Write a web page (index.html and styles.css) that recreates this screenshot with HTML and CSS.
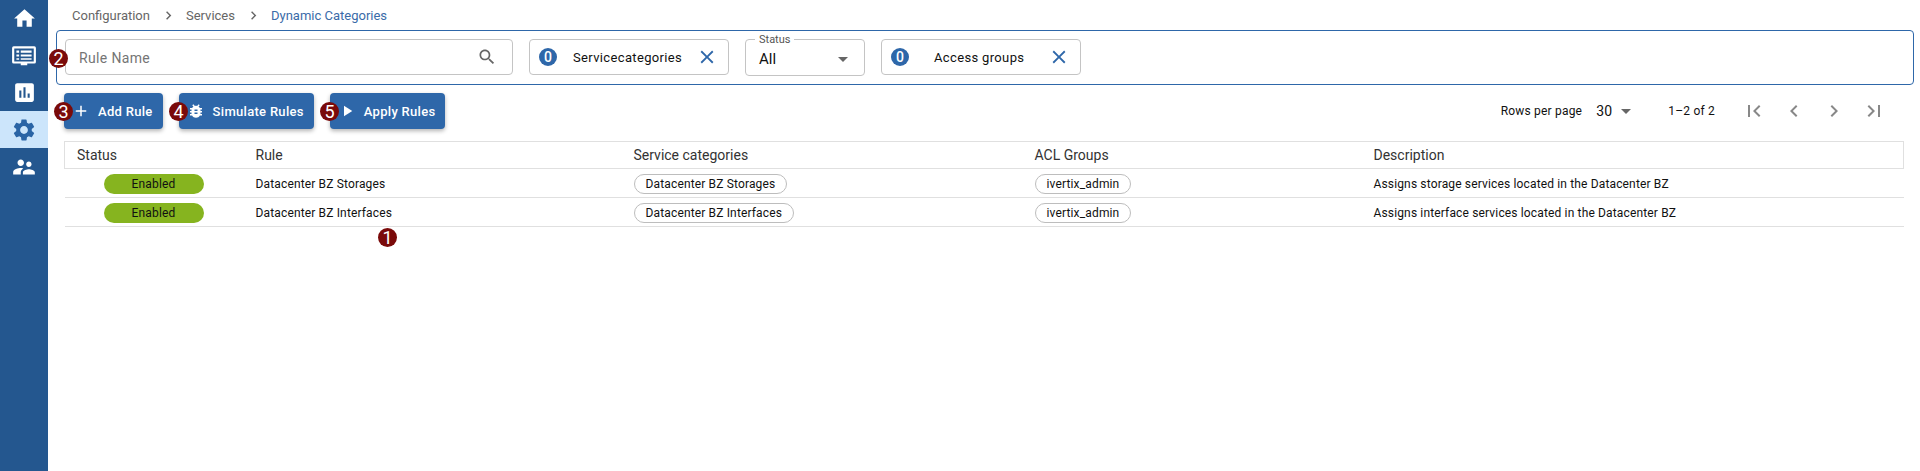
FILE: index.html
```html
<!DOCTYPE html>
<html lang="en">
<head>
    <meta charset="UTF-8">
    <meta name="viewport" content="width=device-width, initial-scale=1.0">
    <title>Dynamic Categories</title>
    <link rel="stylesheet" href="styles.css">
</head>
<body>

    <nav class="sidebar">
        <a class="nav-item"><svg viewBox="0 0 24 24" width="25" height="25"><path d="M10 20v-6h4v6h5v-8h3L12 3 2 12h3v8z"/></svg></a>
        <a class="nav-item"><svg viewBox="0 0 24 24" width="26" height="26"><path fill-rule="evenodd" d="M2.500 3h19A1.500 1.500 0 0 1 23 4.500v13a1.500 1.500 0 0 1-1.500 1.500H15v1.500H9V19H2.500A1.500 1.500 0 0 1 1 17.500v-13A1.500 1.500 0 0 1 2.500 3zM3 5v12h18V5zm2 2h2.500v2H5zm4 0h10v2H9zm-4 3.500h2.500v2H5zm4 0h10v2H9zM5 14h2.500v1.500H5zm4 0h10v1.500H9z"/></svg></a>
        <a class="nav-item"><svg viewBox="0 0 24 24" width="25" height="25"><path d="M19 3H5c-1.100 0-2 .9-2 2v14c0 1.100.9 2 2 2h14c1.100 0 2-.9 2-2V5c0-1.100-.9-2-2-2zM9 17H7v-7h2v7zm4 0h-2V7h2v10zm4 0h-2v-4h2v4z"/></svg></a>
        <a class="nav-item active"><svg viewBox="0 0 24 24" width="26" height="26"><path d="M19.140 12.940c.04-.3.06-.61.06-.94 0-.32-.02-.64-.07-.94l2.030-1.580a.49.49 0 0 0 .12-.61l-1.920-3.320a.488.488 0 0 0-.59-.22l-2.390.96c-.5-.38-1.030-.7-1.620-.94l-.36-2.540a.484.484 0 0 0-.48-.41h-3.840c-.24 0-.43.17-.47.41l-.36 2.540c-.59.24-1.130.57-1.620.94l-2.390-.96c-.22-.08-.47 0-.59.22L2.740 8.870c-.12.21-.08.47.12.61l2.030 1.580c-.05.3-.09.63-.09.94s.02.64.07.94l-2.030 1.580a.49.49 0 0 0-.12.61l1.920 3.320c.12.22.37.29.59.22l2.390-.96c.5.38 1.030.7 1.620.94l.36 2.540c.05.24.24.41.48.41h3.840c.24 0 .44-.17.47-.41l.36-2.540c.59-.24 1.130-.56 1.620-.94l2.390.96c.22.08.47 0 .59-.22l1.920-3.320c.12-.22.07-.47-.12-.61l-2.010-1.580zM12 15.600c-1.980 0-3.600-1.620-3.600-3.600s1.620-3.600 3.600-3.600 3.600 1.620 3.600 3.600-1.620 3.600-3.600 3.600z"/></svg></a>
        <a class="nav-item"><svg viewBox="0 0 24 24" width="26" height="26"><path d="M16.500 12c1.380 0 2.490-1.120 2.490-2.500S17.880 7 16.500 7 14 8.120 14 9.500s1.120 2.500 2.500 2.500zM9 11c1.660 0 2.990-1.340 2.990-3S10.660 5 9 5 6 6.340 6 8s1.340 3 3 3zm7.500 3c-1.830 0-5.500.92-5.500 2.750V19h11v-2.250c0-1.830-3.670-2.750-5.500-2.750zM9 13c-2.330 0-7 1.170-7 3.500V19h7v-2.250c0-.85.33-2.340 2.370-3.470C10.500 13.100 9.660 13 9 13z"/></svg></a>
    </nav>

    <main class="content">
        <div class="breadcrumb">
            <span>Configuration</span>
            <svg class="crumb-sep" viewBox="0 0 24 24" width="17" height="17"><path d="M10 6 8.590 7.410 13.170 12l-4.580 4.590L10 18l6-6z"/></svg>
            <span>Services</span>
            <svg class="crumb-sep" viewBox="0 0 24 24" width="17" height="17"><path d="M10 6 8.590 7.410 13.170 12l-4.580 4.590L10 18l6-6z"/></svg>
            <span class="crumb-current">Dynamic Categories</span>
        </div>

        <section class="filters">
            <div class="field search-field">
                <span class="placeholder">Rule Name</span>
                <svg viewBox="0 0 24 24" width="20" height="20"><path d="M15.500 14h-.79l-.28-.27C15.410 12.590 16 11.110 16 9.500 16 5.910 13.090 3 9.500 3S3 5.910 3 9.500 5.910 16 9.500 16c1.610 0 3.090-.59 4.230-1.570l.27.28v.79l5 4.990L20.490 19l-4.990-5zm-6 0C7.010 14 5 11.990 5 9.500S7.010 5 9.500 5 14 7.010 14 9.500 11.990 14 9.500 14z"/></svg>
            </div>
            <div class="field chip-field">
                <span class="count">0</span>
                <span class="chip-label label-services">Servicecategories</span>
                <svg class="clear" viewBox="0 0 24 24" width="22" height="22"><path d="M19 6.410 17.590 5 12 10.590 6.410 5 5 6.410 10.590 12 5 17.590 6.410 19 12 13.410 17.590 19 19 17.590 13.410 12z"/></svg>
            </div>
            <div class="field status-field">
                <span class="legend">Status</span>
                <span class="status-value">All</span>
                <span class="caret"></span>
            </div>
            <div class="field chip-field">
                <span class="count">0</span>
                <span class="chip-label label-access">Access groups</span>
                <svg class="clear" viewBox="0 0 24 24" width="22" height="22"><path d="M19 6.410 17.590 5 12 10.590 6.410 5 5 6.410 10.590 12 5 17.590 6.410 19 12 13.410 17.590 19 19 17.590 13.410 12z"/></svg>
            </div>
        </section>

        <div class="toolbar">
            <button class="btn btn-add">
                <svg viewBox="0 0 24 24" width="18" height="18"><path d="M19 13h-6v6h-2v-6H5v-2h6V5h2v6h6v2z"/></svg>
                Add Rule
            </button>
            <button class="btn btn-simulate">
                <svg viewBox="0 0 24 24" width="18" height="18"><path d="M20 8h-2.810c-.45-.78-1.070-1.450-1.820-1.960L17 4.410 15.590 3l-2.170 2.170C12.960 5.060 12.490 5 12 5c-.49 0-.96.06-1.410.17L8.410 3 7 4.410l1.620 1.630C7.880 6.550 7.260 7.220 6.810 8H4v2h2.090c-.05.33-.09.66-.09 1v1H4v2h2v1c0 .34.04.67.09 1H4v2h2.810c1.040 1.790 2.970 3 5.190 3s4.150-1.210 5.190-3H20v-2h-2.090c.05-.33.09-.66.09-1v-1h2v-2h-2v-1c0-.34-.04-.67-.09-1H20V8zm-6 8h-4v-2h4v2zm0-4h-4v-2h4v2z"/></svg>
                Simulate Rules
            </button>
            <button class="btn btn-apply">
                <svg viewBox="0 0 24 24" width="18" height="18"><path d="M8 5v14l11-7z"/></svg>
                Apply Rules
            </button>

            <div class="pagination">
                <span class="rows-label">Rows per page</span>
                <span class="rows-value">30</span>
                <span class="caret"></span>
                <span class="range">1–2 of 2</span>
                <svg viewBox="0 0 24 24" width="24" height="24"><path d="M18.410 16.590 13.820 12l4.590-4.590L17 6l-6 6 6 6zM6 6h2v12H6z"/></svg>
                <svg viewBox="0 0 24 24" width="24" height="24"><path d="M15.410 7.410 14 6l-6 6 6 6 1.410-1.410L10.830 12z"/></svg>
                <svg viewBox="0 0 24 24" width="24" height="24"><path d="M10 6 8.590 7.410 13.170 12l-4.580 4.590L10 18l6-6z"/></svg>
                <svg viewBox="0 0 24 24" width="24" height="24"><path d="M5.590 7.410 10.180 12l-4.590 4.590L7 18l6-6-6-6zM16 6h2v12h-2z"/></svg>
            </div>
        </div>

        <table class="rules">
            <colgroup>
                <col class="col-status"><col class="col-rule"><col class="col-cat"><col class="col-acl"><col class="col-desc">
            </colgroup>
            <thead>
                <tr>
                    <th>Status</th>
                    <th>Rule</th>
                    <th>Service categories</th>
                    <th>ACL Groups</th>
                    <th>Description</th>
                </tr>
            </thead>
            <tbody>
                <tr>
                    <td><span class="state">Enabled</span></td>
                    <td>Datacenter BZ Storages</td>
                    <td><span class="tag">Datacenter BZ Storages</span></td>
                    <td><span class="tag">ivertix_admin</span></td>
                    <td>Assigns storage services located in the Datacenter BZ</td>
                </tr>
                <tr>
                    <td><span class="state">Enabled</span></td>
                    <td>Datacenter BZ Interfaces</td>
                    <td><span class="tag">Datacenter BZ Interfaces</span></td>
                    <td><span class="tag">ivertix_admin</span></td>
                    <td>Assigns interface services located in the Datacenter BZ</td>
                </tr>
            </tbody>
        </table>
    </main>

    <!-- numbered callouts laid over the screenshot -->
    <span class="callout callout-1">1</span>
    <span class="callout callout-2">2</span>
    <span class="callout callout-3">3</span>
    <span class="callout callout-4">4</span>
    <span class="callout callout-5">5</span>

</body>
</html>
```

FILE: styles.css
```css
* {
    box-sizing: border-box;
}

html, body {
    height: 100%;
}

body {
    margin: 0;
    display: flex;
    overflow: hidden;
    position: relative;
    font-family: Roboto, "Liberation Sans", sans-serif;
    font-size: 12px;
    color: #111;
    background-color: #fff;
}

/* sidebar */
.sidebar {
    width: 48px;
    flex-shrink: 0;
    background-color: #24578f;
}

.nav-item {
    height: 37px;
    display: flex;
    align-items: center;
    justify-content: center;
    fill: #fff;
}

.nav-item.active {
    background-color: #cce5fb;
    fill: #2a64a5;
}

.content {
    flex: 1;
    min-width: 0;
    padding: 0 6px 0 8px;
}

/* breadcrumb */
.breadcrumb {
    height: 30px;
    padding-left: 16px;
    display: flex;
    align-items: center;
    font-size: 13px;
    color: #666;
}

.crumb-sep {
    margin: 0 9px 0 10px;
    fill: #666;
}

.crumb-current {
    color: #3a6ba8;
}

/* filters */
.filters {
    height: 55px;
    padding: 8px;
    display: flex;
    align-items: flex-start;
    gap: 16px;
    border: 1px solid #2e67a9;
    border-radius: 4px;
}

.field {
    height: 36px;
    display: flex;
    align-items: center;
    position: relative;
    border: 1px solid #c4c4c4;
    border-radius: 4px;
    font-size: 13px;
    letter-spacing: 0.35px;
}

.search-field {
    width: 448px;
    padding: 0 15px 0 13px;
    justify-content: space-between;
    fill: #666;
}

.placeholder {
    padding-top: 1px;
    font-size: 14px;
    color: #757575;
}

.chip-field {
    width: 200px;
    padding-left: 9px;
}

.count {
    width: 18px;
    height: 18px;
    border-radius: 50%;
    display: flex;
    align-items: center;
    justify-content: center;
    font-size: 14px;
    letter-spacing: 0;
    color: #fff;
    background-color: #2e67a9;
    font-weight: 500;
}

.chip-label {
    flex: 1;
}

.label-services {
    padding-left: 16px;
}

.label-access {
    padding-left: 25px;
}

.clear {
    margin-right: 10px;
    fill: #2e67a9;
}

.status-field {
    width: 120px;
    height: 37px;
    padding: 3px 16px 0 13px;
    justify-content: space-between;
}

.legend {
    position: absolute;
    top: -7px;
    left: 9px;
    padding: 0 4px;
    font-size: 11px;
    letter-spacing: 0;
    color: #555;
    background-color: #fff;
}

.status-value {
    font-size: 15px;
    letter-spacing: 0;
}

.caret {
    width: 0;
    height: 0;
    border-left: 5px solid transparent;
    border-right: 5px solid transparent;
    border-top: 5px solid #666;
}

/* toolbar */
.toolbar {
    height: 36px;
    margin-top: 8px;
    padding-left: 8px;
    display: flex;
    align-items: center;
    gap: 16px;
}

.btn {
    height: 36px;
    padding: 0 10px 0 8px;
    display: flex;
    align-items: center;
    border: none;
    border-radius: 4px;
    font-family: inherit;
    font-size: 13px;
    font-weight: 500;
    letter-spacing: 0.3px;
    color: #fff;
    fill: #fff;
    background-color: #2e67a9;
    box-shadow: 0 2px 4px rgba(0, 0, 0, 0.3);
}

.btn svg {
    margin-right: 8px;
}

.pagination {
    margin-left: auto;
    padding-right: 28px;
    display: flex;
    align-items: center;
    letter-spacing: 0.2px;
    fill: #888;
}

.pagination svg {
    margin-left: 16px;
}

.rows-label {
    margin-right: 14px;
}

.rows-value {
    margin-right: 9px;
    font-size: 14px;
}

.range {
    margin: 0 11px 0 37px;
}

/* table */
.rules {
    width: 1839px;
    margin: 12px 0 0 8px;
    table-layout: fixed;
    border-collapse: collapse;
}

.col-status { width: 179px; }
.col-rule { width: 378px; }
.col-cat { width: 401px; }
.col-acl { width: 339px; }
.col-desc { width: 542px; }

.rules th {
    height: 27px;
    padding: 0 12px;
    text-align: left;
    font-size: 14px;
    font-weight: 400;
    color: #333;
    border-top: 1px solid #e0e0e0;
    border-bottom: 1px solid #e0e0e0;
}

.rules th:first-child {
    border-left: 1px solid #e0e0e0;
}

.rules th:last-child {
    border-right: 1px solid #e0e0e0;
}

.rules td {
    height: 29px;
    padding: 1px 12px 0;
    letter-spacing: 0.15px;
    border-bottom: 1px solid #e0e0e0;
}

.state {
    width: 100px;
    height: 20px;
    margin-left: 27px;
    display: flex;
    align-items: center;
    justify-content: center;
    border-radius: 10px;
    background-color: #86b41f;
}

.tag {
    height: 20px;
    padding: 0 11px;
    display: inline-flex;
    align-items: center;
    vertical-align: middle;
    border: 1px solid #bdbdbd;
    border-radius: 10px;
}

/* callouts */
.callout {
    position: absolute;
    width: 19px;
    height: 19px;
    border-radius: 50%;
    display: flex;
    align-items: center;
    justify-content: center;
    font-size: 18px;
    color: #fff;
    background-color: #7a0a0a;
}

.callout-1 { left: 378px; top: 228px; }
.callout-2 { left: 49px; top: 49px; }
.callout-3 { left: 54px; top: 102px; }
.callout-4 { left: 169px; top: 102px; }
.callout-5 { left: 320px; top: 102px; }
```
